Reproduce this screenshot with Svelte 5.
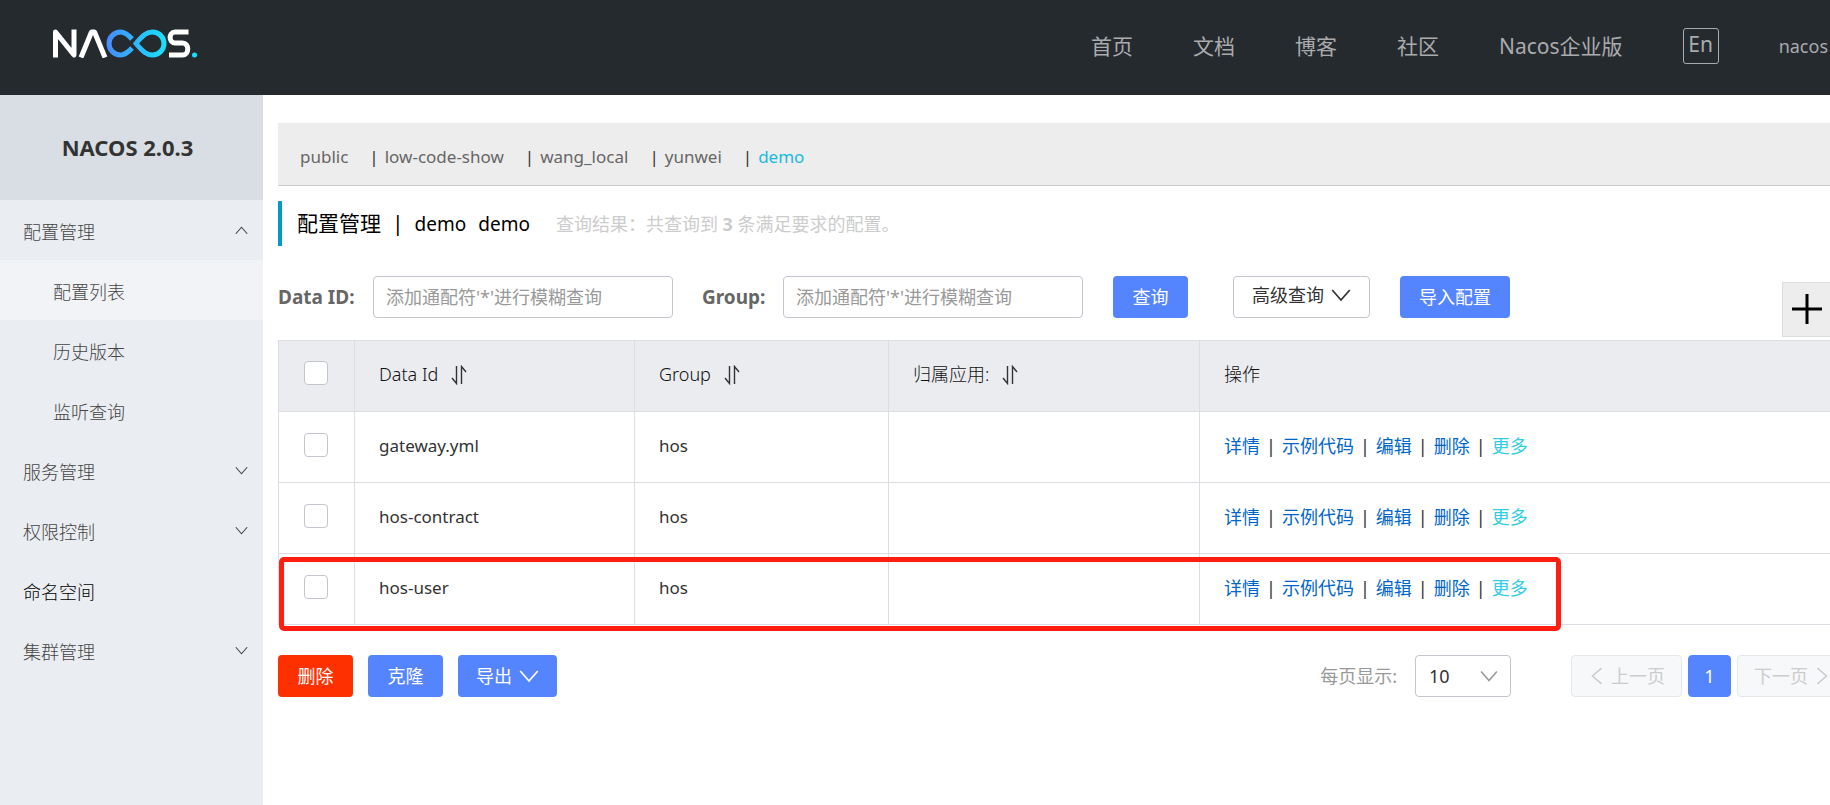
<script>
  const nav = ['首页', '文档', '博客', '社区', 'Nacos企业版'];
  const menu = [
    { label: '配置管理', arrow: 'up' },
    { label: '配置列表', child: true, active: true },
    { label: '历史版本', child: true },
    { label: '监听查询', child: true },
    { label: '服务管理', arrow: 'down' },
    { label: '权限控制', arrow: 'down' },
    { label: '命名空间', dark: true },
    { label: '集群管理', arrow: 'down' }
  ];
  const namespaces = ['public', 'low-code-show', 'wang_local', 'yunwei', 'demo'];
  const columns = ['Data Id', 'Group', '归属应用:'];
  const rows = [
    { id: 'gateway.yml', group: 'hos' },
    { id: 'hos-contract', group: 'hos' },
    { id: 'hos-user', group: 'hos', marked: true }
  ];
  const actions = ['详情', '示例代码', '编辑', '删除', '更多'];
</script>

{#snippet chevron(dir, size)}
  <svg class="chev {dir}" width={size} height={size} viewBox="0 0 16 16" aria-hidden="true">
    <path d="M1 4 L8 12 L15 4" fill="none" stroke="currentColor" stroke-width="1.4" />
  </svg>
{/snippet}

<div class="page">
  <header>
    <a class="logo" href="#home" aria-label="Nacos">
      <svg width="144" height="29" viewBox="0 0 144 29">
        <defs>
          <linearGradient id="loop" gradientUnits="userSpaceOnUse" x1="53" y1="0" x2="113" y2="0">
            <stop offset="0" stop-color="#478bff" />
            <stop offset="1" stop-color="#17e2fb" />
          </linearGradient>
        </defs>
        <g fill="none" stroke="#fff" stroke-width="5" stroke-linejoin="round">
          <path d="M2.5 28.500V3L21 26V0.500" />
          <path d="M28 28.500L38.500 3H41.500L52 28.500" />
          <path d="M135.500 3H122C115.500 3 115.500 14 122 14H129.500C136.500 14 136.500 26 129.500 26H116" />
        </g>
        <g fill="none" stroke="url(#loop)" stroke-width="5">
          <path d="M79 10C75 5.500 72 3 67.500 3A11.500 11.500 0 0 0 67.500 26C72 26 75 23.500 79 19" />
          <path d="M83 14.500C90 6 94 3 99.500 3A11.500 11.500 0 0 1 99.500 26C94 26 90 23 83 14.500Z" />
        </g>
        <circle cx="141.500" cy="26" r="2.500" fill="#17e2fb" />
      </svg>
    </a>
    <nav>
      {#each nav as item}<a href="#nav">{item}</a>{/each}
      <button class="lang" type="button">En</button>
      <a class="user" href="#user">nacos</a>
    </nav>
  </header>

  <div class="body">
    <aside>
      <h1>NACOS 2.0.3</h1>
      <ul>
        {#each menu as m}
          <li>
            <a href="#menu" class:child={m.child} class:active={m.active} class:dark={m.dark}>
              {m.label}
              {#if m.arrow}{@render chevron(m.arrow, 13)}{/if}
            </a>
          </li>
        {/each}
      </ul>
    </aside>

    <main>
      <div class="namespaces">
        {#each namespaces as n, i}
          {#if i}<span class="bar">|</span>{/if}<a href="#ns" class:current={n === 'demo'}>{n}</a>
        {/each}
      </div>

      <div class="title">
        <h2>配置管理<span class="sep">|</span><span class="latin">demo</span><span class="latin tenant">demo</span></h2>
        <p>查询结果：共查询到 <strong>3</strong> 条满足要求的配置。</p>
      </div>

      <form>
        <label for="data-id">Data ID:</label>
        <input id="data-id" type="text" placeholder="添加通配符'*'进行模糊查询" />
        <label class="group" for="group">Group:</label>
        <input id="group" type="text" placeholder="添加通配符'*'进行模糊查询" />
        <button class="btn search" type="button">查询</button>
        <button class="btn plain" type="button">高级查询 {@render chevron('down', 20)}</button>
        <button class="btn import" type="button">导入配置</button>
        <button class="add" type="button" aria-label="新建配置">
          <svg width="30" height="30" viewBox="0 0 30 30"><path d="M15 0V30M0 15H30" stroke="#000" stroke-width="3" /></svg>
        </button>
      </form>

      <table>
        <colgroup><col class="c0" /><col class="c1" /><col class="c2" /><col class="c3" /><col /></colgroup>
        <thead>
          <tr>
            <th><input type="checkbox" aria-label="全选" /></th>
            {#each columns as c}
              <th>
                {c}
                <svg class="sort" width="16" height="20" viewBox="0 0 16 20" aria-hidden="true">
                  <path d="M5.500 1V18.500L1 13M10.500 19V1.500L15 7" fill="none" stroke="#333" stroke-width="1.400" />
                </svg>
              </th>
            {/each}
            <th>操作</th>
          </tr>
        </thead>
        <tbody>
          {#each rows as r}
            <tr>
              <td class:marked={r.marked}><input type="checkbox" aria-label={r.id} /></td>
              <td class="name">{r.id}</td>
              <td class="name">{r.group}</td>
              <td></td>
              <td class="actions">
                {#each actions as a, i}{#if i}<span>|</span>{/if}<a href="#row" class:more={i === 4}>{a}</a>{/each}
              </td>
            </tr>
          {/each}
        </tbody>
      </table>

      <footer>
        <button class="btn danger" type="button">删除</button>
        <button class="btn" type="button">克隆</button>
        <button class="btn" type="button">导出 {@render chevron('down', 20)}</button>
        <div class="pager">
          <label for="size">每页显示:</label>
          <span class="select">
            <select id="size"><option>10</option><option>20</option></select>
            {@render chevron('down', 18)}
          </span>
          <button class="page-btn prev" type="button" disabled>{@render chevron('left', 18)}上一页</button>
          <button class="page-btn on" type="button">1</button>
          <button class="page-btn" type="button" disabled>下一页{@render chevron('right', 18)}</button>
        </div>
      </footer>
    </main>
  </div>
</div>

<style>
  :global(body) { background: #fff; }
  .page {
    font: 400 18px/24px "Noto Sans", "Noto Sans CJK SC", sans-serif;
    color: #333;
    min-height: 100vh;
    display: flex;
    flex-direction: column;
    overflow: hidden;
  }
  .page *, .page { box-sizing: border-box; }
  a { text-decoration: none; color: inherit; }
  button, input, select { font: inherit; color: inherit; margin: 0; }
  button { cursor: pointer; }
  .chev { flex: none; }
  .up { transform: rotate(180deg); }
  .left { transform: rotate(90deg); }
  .right { transform: rotate(-90deg); }

  header {
    height: 95px;
    background: #252a2f;
    display: flex;
    align-items: center;
    justify-content: space-between;
    padding: 0 2px 4px 53px;
    color: #aaabad;
  }
  .logo { display: flex; padding-bottom: 4px; }
  nav { display: flex; align-items: center; gap: 60px; font-size: 21px; }
  .lang {
    width: 36px;
    height: 36px;
    padding: 0 0 4px;
    background: none;
    border: 1px solid #aaabad;
    border-radius: 3px;
  }
  .user { font-size: 18px; }

  .body { flex: 1; display: flex; }
  aside { width: 263px; flex: none; background: #eaedf1; font-weight: 300; }
  h1 {
    margin: 0;
    height: 105px;
    background: #d9dde4;
    font-size: 22px;
    line-height: 105px;
    font-weight: 700;
    text-align: center;
    padding-right: 8px;
  }
  ul { list-style: none; margin: 0; padding: 0; }
  li a {
    display: flex;
    align-items: center;
    justify-content: space-between;
    height: 60px;
    padding: 4px 15px 0 23px;
    color: #444;
  }
  li .chev { margin-bottom: 4px; }
  li a.child { padding-left: 53px; }
  li a.active { background: #f2f3f7; }
  li a.dark { color: #000; }

  main { flex: 1; min-width: 0; padding: 28px 0 0 15px; }
  .namespaces {
    height: 63px;
    padding: 6px 22px 0;
    background: #ededed;
    border-bottom: 1px solid #ccc;
    display: flex;
    align-items: center;
    font-size: 17px;
    color: #666;
  }
  .bar { color: #333; margin: 0 6px 0 21px; }
  .current { color: #18bbe0; }
  .title { display: flex; align-items: center; height: 45px; margin-top: 15px; padding-left: 15px; border-left: 4px solid #09c; }
  h2 { margin: 0; font-size: 21px; font-weight: 400; color: #000; }
  .latin { font-size: 19px; }
  .sep { margin: 0 11px; }
  .tenant { margin-left: 12px; }
  .title p { margin: 0 0 0 26px; color: #ccc; }
  strong { font-weight: 700; }

  form { display: flex; align-items: center; margin-top: 30px; }
  form label { font-size: 19px; font-weight: 700; color: #666; width: 95px; }
  form label.group { width: 81px; margin-left: 29px; }
  form input { width: 300px; height: 42px; padding: 0 12px; border: 1px solid #c4c6cf; border-radius: 4px; background: #fff; }
  form input::placeholder { color: #999; opacity: 1; }
  .btn {
    height: 42px;
    min-width: 75px;
    padding: 0 18px;
    border: 0;
    border-radius: 4px;
    background: #5584ff;
    color: #fff;
    display: flex;
    align-items: center;
    justify-content: center;
    gap: 7px;
  }
  .btn.danger { background: #ff3000; }
  .btn.search { margin-left: 30px; }
  .btn.plain { margin-left: 45px; background: #fff; color: #333; border: 1px solid #c4c6cf; padding: 0 18px 4px; }
  .btn.import { margin-left: 30px; padding: 0 19px; }
  .add {
    margin: 6px 0 -19px auto;
    width: 48px;
    height: 55px;
    padding: 0 9px 2px;
    background: #ededed;
    border: solid #ddd;
    border-width: 1px 0 1px 1px;
    display: flex;
    align-items: center;
  }
  .add svg { flex: none; }

  table { width: 100%; margin-top: 22px; border-collapse: collapse; table-layout: fixed; }
  .c0 { width: 76px; }
  .c1 { width: 280px; }
  .c2 { width: 254px; }
  .c3 { width: 311px; }
  th, td { height: 71px; padding: 0 24px 2px; border: 1px solid #dcdee3; text-align: left; font-weight: 400; white-space: nowrap; }
  th:last-child, td:last-child { border-right: 0; }
  th { background: #ebecf0; font-weight: 300; color: #111; padding-bottom: 4px; }
  .name { font-size: 17px; }
  .sort { margin-left: 8px; vertical-align: -4px; }
  td input, th input {
    display: block;
    appearance: none;
    width: 24px;
    height: 24px;
    margin: 0 0 2px 1px;
    border: 1px solid #c4c6cf;
    border-radius: 4px;
    background: #fff;
  }
  .marked { position: relative; }
  .marked::after {
    content: "";
    box-sizing: border-box;
    position: absolute;
    left: 0;
    top: 3px;
    width: 1282px;
    height: 74px;
    border: 5px solid #ff1e10;
    border-radius: 5px;
    pointer-events: none;
  }
  .actions a { color: #06c; }
  .actions span { margin: 0 6px; }
  .actions a.more { color: #33cde5; }

  footer { display: flex; gap: 15px; margin-top: 30px; }
  .pager { display: flex; align-items: center; margin: 0 -18px 0 auto; color: #999; }
  .select { position: relative; display: flex; align-items: center; margin: 0 60px 0 18px; }
  .select select { appearance: none; width: 96px; height: 42px; padding: 0 13px; border: 1px solid #c4c6cf; border-radius: 4px; background: #fff; color: #333; }
  .select .chev { position: absolute; right: 13px; pointer-events: none; }
  .page-btn {
    height: 42px;
    width: 111px;
    padding: 0;
    margin-left: 6px;
    display: flex;
    align-items: center;
    justify-content: center;
    gap: 5px;
    border: 1px solid #e6e7eb;
    border-radius: 4px;
    background: #f7f8fa;
    color: #ccc;
  }
  .page-btn.prev { margin-left: 0; }
  .page-btn.on { width: 43px; background: #5584ff; border-color: #5584ff; color: #fff; }
</style>
